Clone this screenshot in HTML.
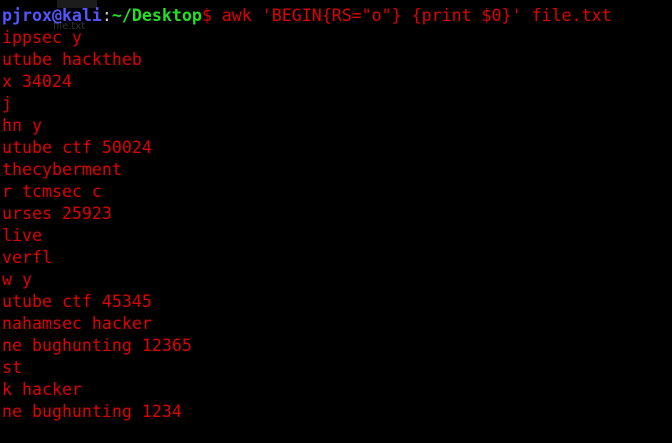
<!DOCTYPE html>
<html><head><meta charset="utf-8"><style>
html,body{margin:0;padding:0;background:#000;width:672px;height:443px;overflow:hidden;position:relative}
pre{margin:0;padding:5px 0 0 2px;font-family:"DejaVu Sans Mono","Liberation Mono",monospace;font-size:16.6px;line-height:22px;color:#e00000;position:relative}
.u{color:#5555ff;font-weight:bold}.p{color:#22e022;font-weight:bold}.w{color:#ccc}
.g{position:absolute;left:57px;top:0;width:40px;height:8px;background:#1c1c1c}
.gt{position:absolute;left:53px;top:21px;font-family:"DejaVu Sans",sans-serif;font-size:10px;color:#333}
</style></head><body><div class="g"></div><div class="gt">file.txt</div><pre><span class="u">pjrox@kali</span><span class="w">:</span><span class="p">~/Desktop</span>$ awk 'BEGIN{RS="o"} {print $0}' file.txt
ippsec y
utube hacktheb
x 34024
j
hn y
utube ctf 50024
thecyberment
r tcmsec c
urses 25923
live
verfl
w y
utube ctf 45345
nahamsec hacker
ne bughunting 12365
st
k hacker
ne bughunting 1234
</pre></body></html>
